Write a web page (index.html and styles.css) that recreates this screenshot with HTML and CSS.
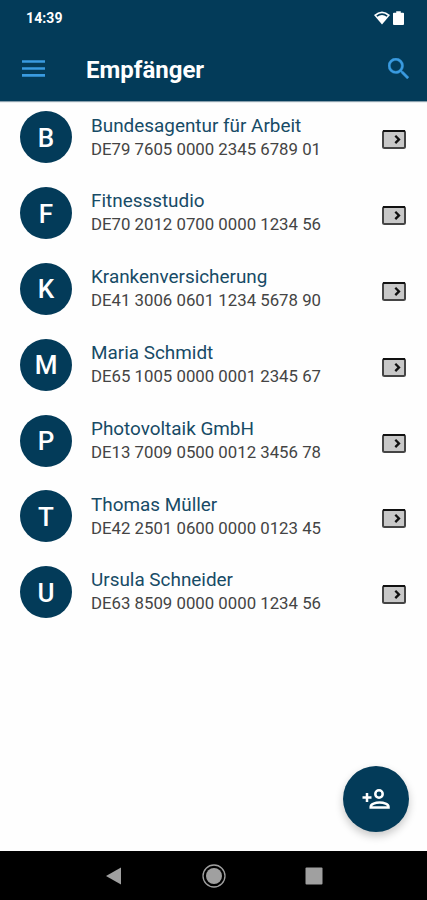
FILE: index.html
```
<!DOCTYPE html>
<html lang="de">
<head>
  <meta charset="UTF-8">
  <meta name="viewport" content="width=device-width, initial-scale=1">
  <title>Empfänger</title>
  <link rel="stylesheet" href="styles.css">
</head>
<body>

  <header class="header">
    <div class="status-bar">
      <span class="time">14:39</span>
      <div class="status-icons">
        <svg class="wifi" viewBox="0 0 16 14">
          <path d="M8 13.5 0 4Q8 -3 16 4Z" fill="#fff"></path>
          <path d="M2.8 5.2Q8 1 13.2 5.2" fill="none" stroke="#033b59" stroke-width="1.6"></path>
        </svg>
        <svg class="battery" viewBox="0 0 12 15">
          <path d="M3.5 0h5v1.7H11a1 1 0 0 1 1 1V14a1 1 0 0 1-1 1H1a1 1 0 0 1-1-1V2.7a1 1 0 0 1 1-1h2.5z" fill="#fff"></path>
        </svg>
      </div>
    </div>
    <div class="toolbar">
      <button class="icon-button" aria-label="Menü">
        <svg class="menu-icon" viewBox="0 0 23 17">
          <path d="M0 1.5h23M0 8.5h23M0 15.3h23" stroke="#3a9be0" stroke-width="2.7"></path>
        </svg>
      </button>
      <h1 class="title">Empfänger</h1>
      <button class="icon-button" aria-label="Suchen">
        <svg class="search-icon" viewBox="3 3 17.5 17.5">
          <path fill="#3a9be0" stroke="#3a9be0" stroke-width=".3" d="M15.5 14h-.79l-.28-.27A6.471 6.471 0 0 0 16 9.5 6.5 6.5 0 1 0 9.5 16c1.61 0 3.09-.59 4.23-1.57l.27.28v.79l5 4.99L20.49 19l-4.99-5zm-6 0C7.01 14 5 11.99 5 9.5S7.01 5 9.5 5 14 7.01 14 9.5 11.99 14 9.5 14z"></path>
        </svg>
      </button>
    </div>
  </header>

  <main class="content">
    <ul class="list" id="list"></ul>
    <button class="fab" aria-label="Empfänger hinzufügen">
      <svg viewBox="0 0 28 20">
        <path d="M.5 8.5h9M5 4v9" fill="none" stroke="#fff" stroke-width="2.5"></path>
        <circle cx="17" cy="5" r="3.7" fill="none" stroke="#fff" stroke-width="2.5"></circle>
        <path d="M8.700 18.600v-.900c0-2.700 4.800-4.200 8.900-4.200s8.900 1.500 8.900 4.200v.9z" fill="none" stroke="#fff" stroke-width="2.5"></path>
      </svg>
    </button>
  </main>

  <nav class="nav-bar">
    <svg viewBox="0 0 24 24"><path d="M4 12 19 3.5v17z" fill="#a0a0a0"></path></svg>
    <svg viewBox="0 0 24 24">
      <circle cx="12" cy="12" r="11" fill="none" stroke="#a0a0a0" stroke-width="1.3"></circle>
      <circle cx="12" cy="12" r="8" fill="#a0a0a0"></circle>
    </svg>
    <svg viewBox="0 0 24 24"><rect x="3.5" y="3.5" width="17" height="17" rx="1" fill="#a0a0a0"></rect></svg>
  </nav>

  <script>
    const recipients = [
      { name: 'Bundesagentur für Arbeit', iban: 'DE79 7605 0000 2345 6789 01' },
      { name: 'Fitnessstudio', iban: 'DE70 2012 0700 0000 1234 56' },
      { name: 'Krankenversicherung', iban: 'DE41 3006 0601 1234 5678 90' },
      { name: 'Maria Schmidt', iban: 'DE65 1005 0000 0001 2345 67' },
      { name: 'Photovoltaik GmbH', iban: 'DE13 7009 0500 0012 3456 78' },
      { name: 'Thomas Müller', iban: 'DE42 2501 0600 0000 0123 45' },
      { name: 'Ursula Schneider', iban: 'DE63 8509 0000 0000 1234 56' }
    ];

    document.getElementById('list').innerHTML = recipients.map(r => `
      <li class="row">
        <div class="avatar">${r.name[0]}</div>
        <div class="details">
          <div class="name">${r.name}</div>
          <div class="iban">${r.iban}</div>
        </div>
        <svg class="open-icon" viewBox="0 0 24 19">
          <rect x="1" y="1" width="22" height="17" rx="1.5" fill="#c8c8c8" stroke="#444" stroke-width="2"></rect>
          <path d="M1 1h22" stroke="#111" stroke-width="2"></path>
          <path d="m13.3 5.7 3.7 3.7-3.7 3.7" fill="none" stroke="#111" stroke-width="2.3"></path>
        </svg>
      </li>
    `).join('');
  </script>

</body>
</html>
```
FILE: styles.css
```
* {
  box-sizing: border-box;
}

body {
  margin: 0;
  height: 100vh;
  display: flex;
  flex-direction: column;
  overflow: hidden;
  background: #fefefe;
  font-family: Roboto, sans-serif;
}

button {
  padding: 0;
  border: none;
  background: none;
  cursor: pointer;
}

svg {
  display: block;
}

.header {
  height: 101px;
  flex: none;
  background: #033b59;
  box-shadow: 0 1px 1px #8aa0ad;
}

.status-bar {
  display: flex;
  align-items: center;
  justify-content: space-between;
  height: 36px;
  padding: 0 23px 0 26px;
}

.time {
  color: #fff;
  font-size: 14px;
  font-weight: 700;
  letter-spacing: 0.1px;
}

.status-icons {
  display: flex;
  align-items: center;
  gap: 3px;
}

.wifi {
  width: 16px;
  height: 14px;
}

.battery {
  width: 11px;
  height: 14px;
}

.toolbar {
  display: flex;
  align-items: center;
  height: 64px;
  padding: 0 18px 0 22px;
}

.menu-icon {
  width: 23px;
  height: 17px;
}

.title {
  flex: 1;
  margin: 4px 0 0 41px;
  color: #fff;
  font-size: 24px;
  font-weight: 700;
}

.search-icon {
  width: 21px;
  height: 21px;
}

.content {
  flex: 1;
  position: relative;
}

.list {
  margin: 0;
  padding: 0;
  list-style: none;
}

.row {
  display: flex;
  align-items: center;
  height: 75.8px;
  padding: 0 21px 3px 20px;
}

.avatar {
  display: flex;
  align-items: center;
  justify-content: center;
  width: 52px;
  height: 52px;
  padding-top: 1px;
  border-radius: 50%;
  background: #033b59;
  color: #fff;
  font-size: 26px;
  font-weight: 500;
}

.details {
  flex: 1;
  margin-left: 19px;
}

.name {
  color: #174b66;
  font-size: 18.9px;
  line-height: 24px;
}

.iban {
  color: #444;
  font-size: 16.8px;
  line-height: 23.5px;
}

.open-icon {
  width: 24px;
  height: 19px;
  margin-top: 5px;
}

.fab {
  position: absolute;
  right: 18px;
  bottom: 19px;
  display: flex;
  align-items: center;
  justify-content: center;
  width: 66px;
  height: 66px;
  border-radius: 50%;
  background: #033b59;
  box-shadow: 0 4px 8px rgba(0, 0, 0, 0.22);
}

.fab svg {
  width: 28px;
  height: 20px;
}

.nav-bar {
  display: flex;
  align-items: center;
  justify-content: center;
  gap: 76px;
  height: 49px;
  flex: none;
  background: #000;
}

.nav-bar svg {
  width: 24px;
  height: 24px;
}
```
